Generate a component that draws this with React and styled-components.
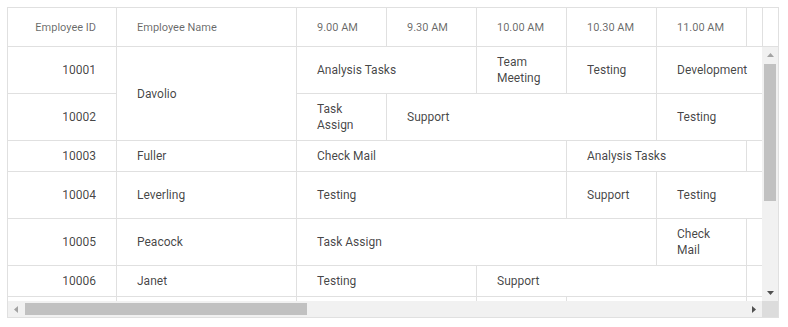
import React from "react";
import styled, { createGlobalStyle } from "styled-components";

const GlobalStyle = createGlobalStyle`
  html, body {
    margin: 0;
    padding: 0;
    background: #fff;
  }
  body {
    font-family: Roboto, "Liberation Sans", sans-serif;
  }
`;

const COLS = "108px 180px repeat(8, 90px)";

// only the first five time slots are in view; the rest sit past the scroll edge
const times = ["9.00 AM", "9.30 AM", "10.00 AM", "10.30 AM", "11.00 AM", "", "", ""];

// each row: id, name (null when covered by a rowspan), height, tasks [text, span]
const rows = [
  {
    id: 10001,
    name: "Davolio",
    nameSpan: 2,
    height: 47,
    tasks: [
      ["Analysis Tasks", 2],
      ["Team Meeting", 1],
      ["Testing", 1],
      ["Development", 2],
      ["", 1],
    ],
  },
  {
    id: 10002,
    name: null,
    height: 47,
    tasks: [
      ["Task Assign", 1],
      ["Support", 3],
      ["Testing", 2],
      ["", 1],
    ],
  },
  {
    id: 10003,
    name: "Fuller",
    height: 31,
    tasks: [
      ["Check Mail", 3],
      ["Analysis Tasks", 2],
      ["", 2],
    ],
  },
  {
    id: 10004,
    name: "Leverling",
    height: 47,
    tasks: [
      ["Testing", 3],
      ["Support", 1],
      ["Testing", 2],
      ["", 1],
    ],
  },
  {
    id: 10005,
    name: "Peacock",
    height: 47,
    tasks: [
      ["Task Assign", 4],
      ["Check Mail", 1],
      ["", 2],
    ],
  },
  {
    id: 10006,
    name: "Janet",
    height: 31,
    tasks: [
      ["Testing", 2],
      ["Support", 3],
      ["", 2],
    ],
  },
  {
    id: "",
    name: "",
    height: 31,
    tasks: [
      ["", 2],
      ["", 1],
      ["", 2],
      ["", 2],
    ],
  },
];

const Page = styled.div`
  padding: 7px;
`;

const Grid = styled.div`
  width: 770px;
  height: 309px;
  border: 1px solid #e0e0e0;
  display: grid;
  grid-template-columns: 754px 16px;
  grid-template-rows: 39px 254px 16px;
  overflow: hidden;
`;

const HeaderBar = styled.div`
  grid-column: 1 / 3;
  display: flex;
  padding-right: 15px;
  border-bottom: 1px solid #e0e0e0;
`;

const HeaderContent = styled.div`
  width: 754px;
  border-right: 1px solid #e0e0e0;
  overflow: hidden;
`;

const Table = styled.div`
  display: grid;
  grid-template-columns: ${COLS};
  width: max-content;
`;

const HeaderCell = styled.div`
  height: 38px;
  display: flex;
  align-items: center;
  justify-content: ${(p) => (p.$right ? "flex-end" : "flex-start")};
  padding: 0 20px 4px;
  border-left: ${(p) => (p.$first ? "none" : "1px solid #e0e0e0")};
  font-size: 11px;
  font-weight: 400;
  color: rgba(0, 0, 0, 0.6);
  white-space: nowrap;
  overflow: hidden;
`;

const Viewport = styled.div`
  overflow: hidden;
`;

const BodyTable = styled(Table)`
  grid-template-rows: ${(p) => p.$rows};
`;

const Cell = styled.div`
  display: flex;
  align-items: center;
  justify-content: ${(p) => (p.$right ? "flex-end" : "flex-start")};
  padding: 2px 20px 0;
  border-left: ${(p) => (p.$first ? "none" : "1px solid #e0e0e0")};
  border-bottom: 1px solid #e0e0e0;
  font-size: 12px;
  line-height: 15.6px;
  color: rgba(0, 0, 0, 0.74);
  overflow: hidden;
  min-width: 0;
`;

const VScroll = styled.div`
  background: #f1f1f1;
  display: flex;
  flex-direction: column;
`;

const HScroll = styled.div`
  background: #f1f1f1;
  display: flex;
  align-items: center;
`;

const Corner = styled.div`
  background: #dcdcdc;
`;

const ArrowButton = styled.div`
  width: 16px;
  height: 16px;
  flex: none;
  display: flex;
  align-items: center;
  justify-content: center;
  color: ${(p) => (p.$disabled ? "#a3a3a3" : "#505050")};
`;

const VTrack = styled.div`
  flex: 1;
  padding: 1px 2px 0 2px;
`;

const VThumb = styled.div`
  width: 12px;
  height: 137px;
  background: #c1c1c1;
`;

const HTrack = styled.div`
  flex: 1;
  height: 100%;
  display: flex;
  align-items: center;
  padding-left: 1px;
`;

const HThumb = styled.div`
  width: 282px;
  height: 12px;
  background: #c1c1c1;
`;

const Arrow = ({ dir }) => {
  const pts = {
    up: "0,4 7,4 3.5,0",
    down: "0,0 7,0 3.5,4",
    left: "4,0 4,7 0,3.5",
    right: "0,0 0,7 4,3.5",
  }[dir];
  const vert = dir === "up" || dir === "down";
  return (
    <svg width={vert ? 7 : 4} height={vert ? 4 : 7} viewBox={vert ? "0 0 7 4" : "0 0 4 7"}>
      <polygon points={pts} fill="currentColor" />
    </svg>
  );
};

const App = () => {
  const cells = [];
  rows.forEach((r, i) => {
    const line = i + 1;
    cells.push(
      <Cell key={`id${i}`} $first $right style={{ gridRow: line, gridColumn: 1 }}>
        {r.id}
      </Cell>
    );
    if (r.name !== null) {
      cells.push(
        <Cell
          key={`nm${i}`}
          style={{ gridRow: `${line} / span ${r.nameSpan || 1}`, gridColumn: 2 }}
        >
          {r.name}
        </Cell>
      );
    }
    let col = 3;
    r.tasks.forEach(([text, span], j) => {
      cells.push(
        <Cell
          key={`t${i}-${j}`}
          style={{ gridRow: line, gridColumn: `${col} / span ${span}` }}
        >
          {text}
        </Cell>
      );
      col += span;
    });
  });

  return (
    <>
      <GlobalStyle />
      <Page>
        <Grid>
          <HeaderBar>
            <HeaderContent>
              <Table>
                <HeaderCell $first $right>
                  Employee ID
                </HeaderCell>
                <HeaderCell>Employee Name</HeaderCell>
                {times.map((t, i) => (
                  <HeaderCell key={i}>{t}</HeaderCell>
                ))}
              </Table>
            </HeaderContent>
          </HeaderBar>

          <Viewport>
            <BodyTable $rows={rows.map((r) => `${r.height}px`).join(" ")}>
              {cells}
            </BodyTable>
          </Viewport>

          <VScroll>
            <ArrowButton $disabled>
              <Arrow dir="up" />
            </ArrowButton>
            <VTrack>
              <VThumb />
            </VTrack>
            <ArrowButton>
              <Arrow dir="down" />
            </ArrowButton>
          </VScroll>

          <HScroll>
            <ArrowButton $disabled>
              <Arrow dir="left" />
            </ArrowButton>
            <HTrack>
              <HThumb />
            </HTrack>
            <ArrowButton>
              <Arrow dir="right" />
            </ArrowButton>
          </HScroll>
          <Corner />
        </Grid>
      </Page>
    </>
  );
};

export default App;
